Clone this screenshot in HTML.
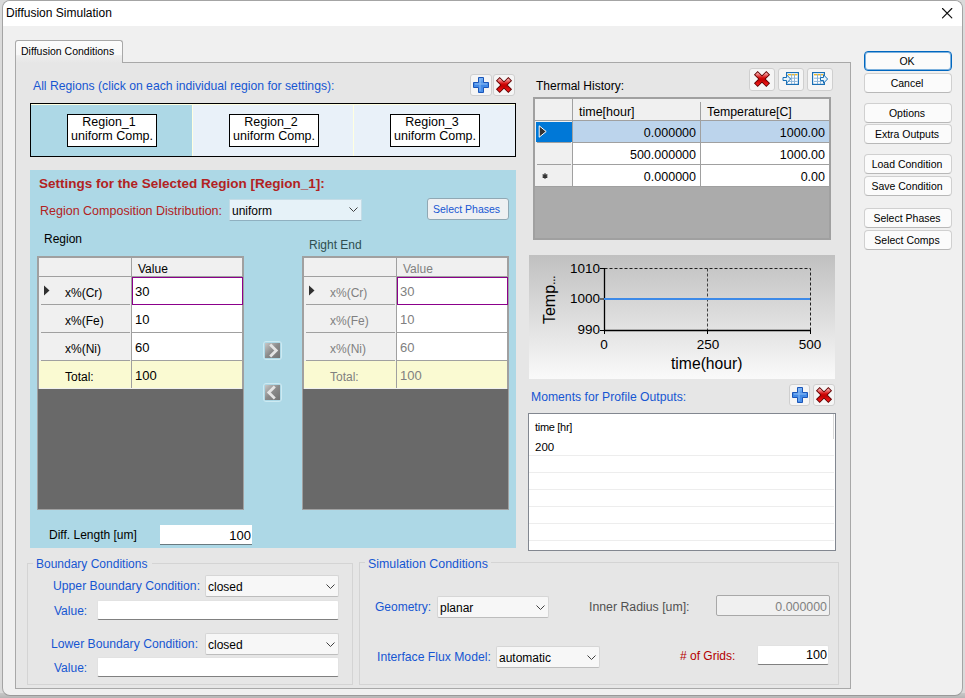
<!DOCTYPE html><html><head><meta charset="utf-8"><style>
html,body{margin:0;padding:0;width:965px;height:698px;overflow:hidden;background:#dadada;}
*{box-sizing:border-box;}
.t{position:absolute;white-space:nowrap;line-height:1;font-family:"Liberation Sans",sans-serif;}
.r{position:absolute;}
svg{position:absolute;overflow:visible;}
</style></head><body>
<div class="r" style="left:0px;top:693px;width:965px;height:5px;background:linear-gradient(#c8c8c8,#b4b4b4);"></div>
<div class="r" style="left:2px;top:0px;width:961px;height:696px;background:#f0f0f0;border:1px solid #a4a4a4;border-bottom-color:#999;border-radius:8px;"></div>
<div class="r" style="left:3px;top:1px;width:959px;height:25px;background:#ffffff;border-radius:7px 7px 0 0;"></div>
<div class="t" style="left:6px;top:7px;font-size:12px;color:#000;font-weight:normal;">Diffusion Simulation</div>
<svg style="left:942px;top:8px" width="11" height="11"><path d="M0.5 0.5 L9.8 9.8 M9.8 0.5 L0.5 9.8" stroke="#111" stroke-width="1.15" stroke-linecap="round"/></svg>
<div class="r" style="left:15px;top:62px;width:836px;height:627px;background:#e6e6e6;border:1px solid #a8a8a8;"></div>
<div class="r" style="left:15px;top:40px;width:108px;height:23px;background:linear-gradient(#fcfcfc 0%,#f7f7f7 65%,#eeeeee 66%,#e6e6e6 100%);border:1px solid #a8a8a8;border-bottom:none;border-radius:3px 3px 0 0;"></div>
<div class="t" style="left:21px;top:46px;font-size:10.5px;color:#000;font-weight:normal;">Diffusion Conditions</div>
<div class="t" style="left:33px;top:80px;font-size:12.2px;color:#1656d2;font-weight:normal;">All Regions (click on each individual region for settings):</div>
<div class="r" style="left:470px;top:74px;width:22px;height:22px;background:#f5f5f5;border:1px solid #cfcfcf;border-radius:3px;"></div>
<svg style="left:473px;top:77px" width="16" height="16" viewBox="0 0 16 16">
<defs><linearGradient id="pg473" x1="0" y1="0" x2="0" y2="1"><stop offset="0" stop-color="#80b8f6"/><stop offset="0.5" stop-color="#3f88e6"/><stop offset="1" stop-color="#4a90ea"/></linearGradient></defs>
<path d="M5.5 0.5 H10.5 V5.5 H15.5 V10.5 H10.5 V15.5 H5.5 V10.5 H0.5 V5.5 H5.5 Z" fill="url(#pg473)" stroke="#1a55b8" stroke-width="1"/>
<path d="M7 2 V14 M2 7 H14" stroke="#a8d0fa" stroke-width="1" opacity="0.7"/>
</svg>
<div class="r" style="left:493px;top:74px;width:22px;height:22px;background:#f5f5f5;border:1px solid #cfcfcf;border-radius:3px;"></div>
<svg style="left:496px;top:77px" width="16" height="16" viewBox="0 0 16 16">
<defs><linearGradient id="xg49677" x1="0" y1="0" x2="0" y2="1"><stop offset="0" stop-color="#f8a0a0"/><stop offset="0.4" stop-color="#d40808"/><stop offset="0.6" stop-color="#c00000"/><stop offset="1" stop-color="#f01818"/></linearGradient></defs>
<path d="M1.8 1.8 L14.2 14.2 M14.2 1.8 L1.8 14.2" stroke="#600000" stroke-width="5.3"/>
<path d="M2.45 2.45 L13.55 13.55 M13.55 2.45 L2.45 13.55" stroke="url(#xg49677)" stroke-width="3.6"/>
</svg>
<div class="r" style="left:30px;top:103px;width:486px;height:54px;background:#e9f1f9;border:1px solid #000;"></div>
<div class="r" style="left:31px;top:104px;width:484px;height:1px;background:#ffffe0;"></div>
<div class="r" style="left:31px;top:104px;width:1px;height:52px;background:#ffffe0;"></div>
<div class="r" style="left:31px;top:105px;width:161px;height:51px;background:#add8e6;"></div>
<div class="r" style="left:192px;top:104px;width:1px;height:52px;background:#ffffe0;"></div>
<div class="r" style="left:353px;top:104px;width:1px;height:52px;background:#ffffe0;"></div>
<div class="r" style="left:67px;top:114px;width:90px;height:33px;background:#fff;border:1px solid #000;"></div>
<div class="t" style="left:9px;width:200px;top:116px;font-size:12.5px;color:#000;font-weight:normal;text-align:center;">Region_1</div>
<div class="t" style="left:12px;width:200px;top:130px;font-size:12.5px;color:#000;font-weight:normal;text-align:center;">uniform Comp.</div>
<div class="r" style="left:229px;top:114px;width:90px;height:33px;background:#fff;border:1px solid #000;"></div>
<div class="t" style="left:171px;width:200px;top:116px;font-size:12.5px;color:#000;font-weight:normal;text-align:center;">Region_2</div>
<div class="t" style="left:174px;width:200px;top:130px;font-size:12.5px;color:#000;font-weight:normal;text-align:center;">uniform Comp.</div>
<div class="r" style="left:390px;top:114px;width:90px;height:33px;background:#fff;border:1px solid #000;"></div>
<div class="t" style="left:332px;width:200px;top:116px;font-size:12.5px;color:#000;font-weight:normal;text-align:center;">Region_3</div>
<div class="t" style="left:335px;width:200px;top:130px;font-size:12.5px;color:#000;font-weight:normal;text-align:center;">uniform Comp.</div>
<div class="r" style="left:30px;top:170px;width:486px;height:378px;background:#add8e6;"></div>
<div class="t" style="left:39px;top:177px;font-size:13.5px;color:#b22222;font-weight:bold;">Settings for the Selected Region [Region_1]:</div>
<div class="t" style="left:40px;top:205px;font-size:12.5px;color:#b22222;font-weight:normal;">Region Composition Distribution:</div>
<div class="r" style="left:229px;top:199px;width:133px;height:22px;background:#e6f2f8;border:1px solid #c4dce6;border-bottom:1px solid #8fb0c0;"></div>
<div class="t" style="left:232px;top:205px;font-size:12px;color:#000;font-weight:normal;">uniform</div>
<svg style="left:349px;top:207px" width="10" height="6"><path d="M0.5 0.5 L4.5 4.5 L8.5 0.5" fill="none" stroke="#404040" stroke-width="1"/></svg>
<div class="r" style="left:427px;top:198px;width:82px;height:22px;background:#eef0f2;border:1px solid #90a8b4;border-radius:3px;"></div>
<div class="t" style="left:433px;top:204px;font-size:10.5px;color:#1656d2;font-weight:normal;">Select Phases</div>
<div class="t" style="left:44px;top:233px;font-size:12px;color:#000;font-weight:normal;">Region</div>
<div class="t" style="left:309px;top:239px;font-size:12px;color:#2f4f4f;font-weight:normal;">Right End</div>
<div class="r" style="left:37px;top:256px;width:207px;height:254px;background:#696969;border:1px solid #a0a0a0;"></div>
<div class="r" style="left:38px;top:257px;width:205px;height:1px;background:#a0a0a0;"></div>
<div class="r" style="left:38px;top:257px;width:1px;height:132px;background:#a0a0a0;"></div>
<div class="r" style="left:242px;top:257px;width:1px;height:132px;background:#a0a0a0;"></div>
<div class="r" style="left:39px;top:258px;width:203px;height:19px;background:#f0f0f0;border-bottom:1px solid #a0a0a0;"></div>
<div class="r" style="left:131px;top:258px;width:1px;height:131px;background:#a0a0a0;"></div>
<div class="t" style="left:138px;top:263px;font-size:12px;color:#000;font-weight:normal;">Value</div>
<div class="r" style="left:39px;top:277px;width:92px;height:27px;background:#f0f0f0;"></div>
<div class="r" style="left:132px;top:277px;width:110px;height:27px;background:#fff;"></div>
<div class="r" style="left:39px;top:304px;width:92px;height:1px;background:#f0f0f0;"></div>
<div class="r" style="left:41px;top:304px;width:89px;height:1px;background:#a0a0a0;"></div>
<div class="r" style="left:132px;top:304px;width:110px;height:1px;background:#a0a0a0;"></div>
<div class="t" style="left:65px;top:287px;font-size:12px;color:#000;font-weight:normal;">x%(Cr)</div>
<div class="t" style="left:135px;top:285px;font-size:13px;color:#000;font-weight:normal;">30</div>
<div class="r" style="left:39px;top:305px;width:92px;height:27px;background:#f0f0f0;"></div>
<div class="r" style="left:132px;top:305px;width:110px;height:27px;background:#fff;"></div>
<div class="r" style="left:39px;top:332px;width:92px;height:1px;background:#f0f0f0;"></div>
<div class="r" style="left:41px;top:332px;width:89px;height:1px;background:#a0a0a0;"></div>
<div class="r" style="left:132px;top:332px;width:110px;height:1px;background:#a0a0a0;"></div>
<div class="t" style="left:65px;top:315px;font-size:12px;color:#000;font-weight:normal;">x%(Fe)</div>
<div class="t" style="left:135px;top:313px;font-size:13px;color:#000;font-weight:normal;">10</div>
<div class="r" style="left:39px;top:333px;width:92px;height:27px;background:#f0f0f0;"></div>
<div class="r" style="left:132px;top:333px;width:110px;height:27px;background:#fff;"></div>
<div class="r" style="left:39px;top:360px;width:92px;height:1px;background:#f0f0f0;"></div>
<div class="r" style="left:41px;top:360px;width:89px;height:1px;background:#a0a0a0;"></div>
<div class="r" style="left:132px;top:360px;width:110px;height:1px;background:#a0a0a0;"></div>
<div class="t" style="left:65px;top:343px;font-size:12px;color:#000;font-weight:normal;">x%(Ni)</div>
<div class="t" style="left:135px;top:341px;font-size:13px;color:#000;font-weight:normal;">60</div>
<div class="r" style="left:39px;top:361px;width:92px;height:27px;background:#fafad2;"></div>
<div class="r" style="left:132px;top:361px;width:110px;height:27px;background:#fafad2;"></div>
<div class="r" style="left:39px;top:388px;width:203px;height:1px;background:#f0f0f0;"></div>
<div class="t" style="left:65px;top:371px;font-size:12px;color:#000;font-weight:normal;">Total:</div>
<div class="t" style="left:135px;top:369px;font-size:13px;color:#000;font-weight:normal;">100</div>
<div class="r" style="left:132px;top:277px;width:111px;height:28px;border:1px solid #8b008b;"></div>
<svg style="left:44px;top:285px" width="7" height="11"><path d="M0 0.5 L5.5 5.5 L0 10.5 Z" fill="#303030"/></svg>
<div class="r" style="left:302px;top:256px;width:207px;height:254px;background:#696969;border:1px solid #a0a0a0;"></div>
<div class="r" style="left:303px;top:257px;width:205px;height:1px;background:#a0a0a0;"></div>
<div class="r" style="left:303px;top:257px;width:1px;height:132px;background:#a0a0a0;"></div>
<div class="r" style="left:507px;top:257px;width:1px;height:132px;background:#a0a0a0;"></div>
<div class="r" style="left:304px;top:258px;width:203px;height:19px;background:#f0f0f0;border-bottom:1px solid #a0a0a0;"></div>
<div class="r" style="left:396px;top:258px;width:1px;height:131px;background:#a0a0a0;"></div>
<div class="t" style="left:403px;top:263px;font-size:12px;color:#808080;font-weight:normal;">Value</div>
<div class="r" style="left:304px;top:277px;width:92px;height:27px;background:#f0f0f0;"></div>
<div class="r" style="left:397px;top:277px;width:110px;height:27px;background:#fff;"></div>
<div class="r" style="left:304px;top:304px;width:92px;height:1px;background:#f0f0f0;"></div>
<div class="r" style="left:306px;top:304px;width:89px;height:1px;background:#a0a0a0;"></div>
<div class="r" style="left:397px;top:304px;width:110px;height:1px;background:#a0a0a0;"></div>
<div class="t" style="left:330px;top:287px;font-size:12px;color:#808080;font-weight:normal;">x%(Cr)</div>
<div class="t" style="left:400px;top:285px;font-size:13px;color:#808080;font-weight:normal;">30</div>
<div class="r" style="left:304px;top:305px;width:92px;height:27px;background:#f0f0f0;"></div>
<div class="r" style="left:397px;top:305px;width:110px;height:27px;background:#fff;"></div>
<div class="r" style="left:304px;top:332px;width:92px;height:1px;background:#f0f0f0;"></div>
<div class="r" style="left:306px;top:332px;width:89px;height:1px;background:#a0a0a0;"></div>
<div class="r" style="left:397px;top:332px;width:110px;height:1px;background:#a0a0a0;"></div>
<div class="t" style="left:330px;top:315px;font-size:12px;color:#808080;font-weight:normal;">x%(Fe)</div>
<div class="t" style="left:400px;top:313px;font-size:13px;color:#808080;font-weight:normal;">10</div>
<div class="r" style="left:304px;top:333px;width:92px;height:27px;background:#f0f0f0;"></div>
<div class="r" style="left:397px;top:333px;width:110px;height:27px;background:#fff;"></div>
<div class="r" style="left:304px;top:360px;width:92px;height:1px;background:#f0f0f0;"></div>
<div class="r" style="left:306px;top:360px;width:89px;height:1px;background:#a0a0a0;"></div>
<div class="r" style="left:397px;top:360px;width:110px;height:1px;background:#a0a0a0;"></div>
<div class="t" style="left:330px;top:343px;font-size:12px;color:#808080;font-weight:normal;">x%(Ni)</div>
<div class="t" style="left:400px;top:341px;font-size:13px;color:#808080;font-weight:normal;">60</div>
<div class="r" style="left:304px;top:361px;width:92px;height:27px;background:#fafad2;"></div>
<div class="r" style="left:397px;top:361px;width:110px;height:27px;background:#fafad2;"></div>
<div class="r" style="left:304px;top:388px;width:203px;height:1px;background:#f0f0f0;"></div>
<div class="t" style="left:330px;top:371px;font-size:12px;color:#808080;font-weight:normal;">Total:</div>
<div class="t" style="left:400px;top:369px;font-size:13px;color:#808080;font-weight:normal;">100</div>
<div class="r" style="left:397px;top:277px;width:111px;height:28px;border:1px solid #8b008b;"></div>
<svg style="left:309px;top:285px" width="7" height="11"><path d="M0 0.5 L5.5 5.5 L0 10.5 Z" fill="#303030"/></svg>
<div class="r" style="left:263px;top:341px;width:19px;height:19px;background:#add8e6;border:1px solid #cdeaf2;border-radius:3px;"></div>
<svg style="left:265px;top:343px" width="15" height="15"><defs><linearGradient id="ag341" x1="0" y1="0" x2="1" y2="1"><stop offset="0" stop-color="#c8c8c8"/><stop offset="0.5" stop-color="#8a8a8a"/><stop offset="1" stop-color="#747474"/></linearGradient></defs>
<rect x="0" y="0" width="15" height="15" fill="url(#ag341)"/><path d="M5.2 1.6 L11.2 7.5 L5.2 13.4" fill="none" stroke="#e4e4e4" stroke-width="2.8"/></svg>
<div class="r" style="left:263px;top:383px;width:19px;height:19px;background:#add8e6;border:1px solid #cdeaf2;border-radius:3px;"></div>
<svg style="left:265px;top:385px" width="15" height="15"><defs><linearGradient id="ag383" x1="0" y1="0" x2="1" y2="1"><stop offset="0" stop-color="#c8c8c8"/><stop offset="0.5" stop-color="#8a8a8a"/><stop offset="1" stop-color="#747474"/></linearGradient></defs>
<rect x="0" y="0" width="15" height="15" fill="url(#ag383)"/><path d="M9.8 1.6 L3.8 7.5 L9.8 13.4" fill="none" stroke="#e4e4e4" stroke-width="2.8"/></svg>
<div class="t" style="left:49px;top:529px;font-size:12px;color:#000;font-weight:normal;">Diff. Length [um]</div>
<div class="r" style="left:160px;top:525px;width:92px;height:20px;background:#fff;border-bottom:1px solid #6a7a80;"></div>
<div class="t" style="right:714px;top:529px;font-size:13px;color:#000;font-weight:normal;text-align:right;">100</div>
<div class="t" style="left:536px;top:80px;font-size:12px;color:#000;font-weight:normal;">Thermal History:</div>
<div class="r" style="left:749px;top:68px;width:26px;height:23px;background:#f5f5f5;border:1px solid #cfcfcf;border-radius:3px;"></div>
<svg style="left:754px;top:71px" width="16" height="16" viewBox="0 0 16 16">
<defs><linearGradient id="xg75471" x1="0" y1="0" x2="0" y2="1"><stop offset="0" stop-color="#f8a0a0"/><stop offset="0.4" stop-color="#d40808"/><stop offset="0.6" stop-color="#c00000"/><stop offset="1" stop-color="#f01818"/></linearGradient></defs>
<path d="M1.8 1.8 L14.2 14.2 M14.2 1.8 L1.8 14.2" stroke="#600000" stroke-width="5.3"/>
<path d="M2.45 2.45 L13.55 13.55 M13.55 2.45 L2.45 13.55" stroke="url(#xg75471)" stroke-width="3.6"/>
</svg>
<div class="r" style="left:778px;top:68px;width:26px;height:23px;background:#f5f5f5;border:1px solid #cfcfcf;border-radius:3px;"></div>
<div class="r" style="left:807px;top:68px;width:26px;height:23px;background:#f5f5f5;border:1px solid #cfcfcf;border-radius:3px;"></div>
<svg style="left:782px;top:71px" width="20" height="16" viewBox="0 0 20 16"><rect x="4.6" y="1.6" width="11.8" height="11.8" fill="#fff" stroke="#1a6fb5" stroke-width="1.2"/>
<rect x="5.5" y="2.5" width="10" height="2.5" fill="#e4f2fb"/>
<rect x="6" y="3" width="9.5" height="1.3" fill="#f5b820"/>
<path d="M9.6 3 V13 M12.5 3 V13 M6 7.2 H15.5 M6 10.4 H15.5" stroke="#8cb4d8" stroke-width="1"/>
<path d="M1 6.5 H4.5 V3.8 L8.6 8 L4.5 12.2 V9.5 H1 Z" fill="#e6f4fc" stroke="#1a6fb5" stroke-width="1"/></svg>
<svg style="left:812px;top:71px" width="20" height="16" viewBox="0 0 20 16"><rect x="0.6" y="1.6" width="11.8" height="11.8" fill="#fff" stroke="#1a6fb5" stroke-width="1.2"/>
<rect x="1.5" y="2.5" width="10" height="2.5" fill="#e4f2fb"/>
<rect x="2" y="3" width="9.5" height="1.3" fill="#f5b820"/>
<path d="M5.5 3 V13 M8.6 3 V13 M2 7.2 H11.5 M2 10.4 H11.5" stroke="#8cb4d8" stroke-width="1"/>
<path d="M8.5 6.5 H11.5 V3.8 L15.6 8 L11.5 12.2 V9.5 H8.5 Z" fill="#e6f4fc" stroke="#1a6fb5" stroke-width="1"/></svg>
<div class="r" style="left:533px;top:97px;width:298px;height:143px;background:#ababab;border:2px solid #a0a0a0;"></div>
<div class="r" style="left:535px;top:99px;width:294px;height:22px;background:#f0f0f0;border-bottom:1px solid #a0a0a0;"></div>
<div class="r" style="left:572px;top:99px;width:1px;height:88px;background:#a0a0a0;"></div>
<div class="r" style="left:700px;top:102px;width:1px;height:85px;background:#a0a0a0;"></div>
<div class="t" style="left:579px;top:106px;font-size:12.5px;color:#000;font-weight:normal;">time[hour]</div>
<div class="t" style="left:707px;top:106px;font-size:12.3px;color:#000;font-weight:normal;">Temperature[C]</div>
<div class="r" style="left:535px;top:121px;width:37px;height:22px;background:#f0f0f0;"></div>
<div class="r" style="left:536px;top:122px;width:36px;height:20px;background:#0078d7;"></div>
<div class="r" style="left:573px;top:121px;width:127px;height:21px;background:#bcd4ec;"></div>
<div class="r" style="left:701px;top:121px;width:128px;height:21px;background:#bcd4ec;"></div>
<div class="r" style="left:573px;top:142px;width:256px;height:1px;background:#a0a0a0;"></div>
<div class="t" style="right:269px;top:127px;font-size:12.5px;color:#000;font-weight:normal;text-align:right;">0.000000</div>
<div class="t" style="right:140px;top:127px;font-size:12.5px;color:#000;font-weight:normal;text-align:right;">1000.00</div>
<div class="r" style="left:535px;top:143px;width:37px;height:22px;background:#f0f0f0;"></div>
<div class="r" style="left:573px;top:143px;width:127px;height:21px;background:#fff;"></div>
<div class="r" style="left:701px;top:143px;width:128px;height:21px;background:#fff;"></div>
<div class="r" style="left:573px;top:164px;width:256px;height:1px;background:#a0a0a0;"></div>
<div class="t" style="right:269px;top:149px;font-size:12.5px;color:#000;font-weight:normal;text-align:right;">500.000000</div>
<div class="t" style="right:140px;top:149px;font-size:12.5px;color:#000;font-weight:normal;text-align:right;">1000.00</div>
<div class="r" style="left:535px;top:165px;width:37px;height:22px;background:#f0f0f0;"></div>
<div class="r" style="left:573px;top:165px;width:127px;height:21px;background:#fff;"></div>
<div class="r" style="left:701px;top:165px;width:128px;height:21px;background:#fff;"></div>
<div class="r" style="left:573px;top:186px;width:256px;height:1px;background:#a0a0a0;"></div>
<div class="t" style="right:269px;top:171px;font-size:12.5px;color:#000;font-weight:normal;text-align:right;">0.000000</div>
<div class="t" style="right:140px;top:171px;font-size:12.5px;color:#000;font-weight:normal;text-align:right;">0.00</div>
<div class="r" style="left:537px;top:142px;width:34px;height:1px;background:#a0a0a0;"></div>
<div class="r" style="left:537px;top:164px;width:34px;height:1px;background:#a0a0a0;"></div>
<div class="r" style="left:535px;top:186px;width:37px;height:1px;background:#a0a0a0;"></div>
<svg style="left:538px;top:125px" width="10" height="14"><path d="M1.2 0.8 L8.2 6.5 L1.2 12.2 Z" fill="#333" stroke="#fff" stroke-width="1"/></svg>
<svg style="left:542px;top:173px" width="6" height="6"><path d="M3 0.3 V5.7 M0.6 1.6 L5.4 4.4 M0.6 4.4 L5.4 1.6" stroke="#333" stroke-width="1.3"/></svg>
<div class="r" style="left:529px;top:255px;width:306px;height:124px;background:linear-gradient(#c0c0c0,#fafafa);"></div>
<svg style="left:0;top:0" width="965" height="698">
<path d="M604.5 268.5 H810.5 V330" fill="none" stroke="#202020" stroke-width="1" stroke-dasharray="3,2"/>
<path d="M707.5 268.5 V330" fill="none" stroke="#404040" stroke-width="1" stroke-dasharray="3,2"/>
<path d="M604.5 268 V330.5 H810.5" fill="none" stroke="#000" stroke-width="1.3"/>
<path d="M600 268.5 H604 M600 299 H604 M600 330.5 H604 M604.5 330 V334 M707.5 330 V334 M810.5 330 V334" stroke="#000" stroke-width="1"/>
<path d="M604 299 H810" stroke="#3d8ae8" stroke-width="2.2"/>
</svg>
<div class="t" style="right:365px;top:262px;font-size:13.5px;color:#000;font-weight:normal;text-align:right;">1010</div>
<div class="t" style="right:365px;top:292px;font-size:13.5px;color:#000;font-weight:normal;text-align:right;">1000</div>
<div class="t" style="right:365px;top:323px;font-size:13.5px;color:#000;font-weight:normal;text-align:right;">990</div>
<div class="t" style="left:504px;width:200px;top:338px;font-size:13.5px;color:#000;font-weight:normal;text-align:center;">0</div>
<div class="t" style="left:608px;width:200px;top:338px;font-size:13.5px;color:#000;font-weight:normal;text-align:center;">250</div>
<div class="t" style="left:710px;width:200px;top:338px;font-size:13.5px;color:#000;font-weight:normal;text-align:center;">500</div>
<div class="t" style="left:671px;top:356px;font-size:15.7px;color:#000;font-weight:normal;">time(hour)</div>
<div class="t" style="left:520px;top:292px;width:60px;height:16px;font-size:16px;transform:rotate(-90deg);text-align:center;color:#000;">Temp<span style="letter-spacing:-0.6px;font-size:13px">...</span></div>
<div class="t" style="left:531px;top:391px;font-size:12.2px;color:#1656d2;font-weight:normal;">Moments for Profile Outputs:</div>
<div class="r" style="left:789px;top:384px;width:21px;height:22px;background:#f5f5f5;border:1px solid #cfcfcf;border-radius:3px;"></div>
<svg style="left:792px;top:387px" width="16" height="16" viewBox="0 0 16 16">
<defs><linearGradient id="pg792" x1="0" y1="0" x2="0" y2="1"><stop offset="0" stop-color="#80b8f6"/><stop offset="0.5" stop-color="#3f88e6"/><stop offset="1" stop-color="#4a90ea"/></linearGradient></defs>
<path d="M5.5 0.5 H10.5 V5.5 H15.5 V10.5 H10.5 V15.5 H5.5 V10.5 H0.5 V5.5 H5.5 Z" fill="url(#pg792)" stroke="#1a55b8" stroke-width="1"/>
<path d="M7 2 V14 M2 7 H14" stroke="#a8d0fa" stroke-width="1" opacity="0.7"/>
</svg>
<div class="r" style="left:813px;top:384px;width:22px;height:22px;background:#f5f5f5;border:1px solid #cfcfcf;border-radius:3px;"></div>
<svg style="left:816px;top:387px" width="16" height="16" viewBox="0 0 16 16">
<defs><linearGradient id="xg816387" x1="0" y1="0" x2="0" y2="1"><stop offset="0" stop-color="#f8a0a0"/><stop offset="0.4" stop-color="#d40808"/><stop offset="0.6" stop-color="#c00000"/><stop offset="1" stop-color="#f01818"/></linearGradient></defs>
<path d="M1.8 1.8 L14.2 14.2 M14.2 1.8 L1.8 14.2" stroke="#600000" stroke-width="5.3"/>
<path d="M2.45 2.45 L13.55 13.55 M13.55 2.45 L2.45 13.55" stroke="url(#xg816387)" stroke-width="3.6"/>
</svg>
<div class="r" style="left:528px;top:413px;width:308px;height:138px;background:#fff;border:1px solid #828790;"></div>
<div class="r" style="left:529px;top:455px;width:305px;height:1px;background:#ededed;"></div>
<div class="r" style="left:529px;top:472px;width:305px;height:1px;background:#ededed;"></div>
<div class="r" style="left:529px;top:489px;width:305px;height:1px;background:#ededed;"></div>
<div class="r" style="left:529px;top:506px;width:305px;height:1px;background:#ededed;"></div>
<div class="r" style="left:529px;top:523px;width:305px;height:1px;background:#ededed;"></div>
<div class="r" style="left:529px;top:540px;width:305px;height:1px;background:#ededed;"></div>
<div class="r" style="left:833px;top:414px;width:1px;height:25px;background:#d8d8d8;"></div>
<div class="t" style="left:535px;top:422px;font-size:11px;color:#000;font-weight:normal;letter-spacing:-0.3px;">time [hr]</div>
<div class="t" style="left:535px;top:442px;font-size:11.5px;color:#000;font-weight:normal;">200</div>
<div class="r" style="left:27px;top:563px;width:326px;height:122px;border:1px solid #d4d4d4;"></div>
<div class="r" style="left:33px;top:556px;width:119px;height:16px;background:#e6e6e6;"></div>
<div class="t" style="left:36px;top:558px;font-size:12px;color:#1656d2;font-weight:normal;">Boundary Conditions</div>
<div class="t" style="left:53px;top:580px;font-size:12.2px;color:#1656d2;font-weight:normal;">Upper Boundary Condition:</div>
<div class="t" style="left:51px;top:638px;font-size:12.2px;color:#1656d2;font-weight:normal;">Lower Boundary Condition:</div>
<div class="t" style="left:54px;top:605px;font-size:12px;color:#1656d2;font-weight:normal;">Value:</div>
<div class="t" style="left:54px;top:662px;font-size:12px;color:#1656d2;font-weight:normal;">Value:</div>
<div class="r" style="left:205px;top:575px;width:134px;height:22px;background:#f7f7f7;border:1px solid #d6d6d6;border-bottom:1px solid #bdbdbd;border-radius:2px;"></div>
<div class="t" style="left:208px;top:581px;font-size:12px;color:#000;font-weight:normal;">closed</div>
<svg style="left:326px;top:584px" width="10" height="6"><path d="M0.5 0.5 L4.5 4.5 L8.5 0.5" fill="none" stroke="#404040" stroke-width="1"/></svg>
<div class="r" style="left:97px;top:600px;width:242px;height:20px;background:#fff;border:1px solid #e2e2e2;border-bottom:1px solid #808080;border-radius:2px;"></div>
<div class="r" style="left:205px;top:633px;width:134px;height:22px;background:#f7f7f7;border:1px solid #d6d6d6;border-bottom:1px solid #bdbdbd;border-radius:2px;"></div>
<div class="t" style="left:208px;top:639px;font-size:12px;color:#000;font-weight:normal;">closed</div>
<svg style="left:326px;top:642px" width="10" height="6"><path d="M0.5 0.5 L4.5 4.5 L8.5 0.5" fill="none" stroke="#404040" stroke-width="1"/></svg>
<div class="r" style="left:97px;top:657px;width:242px;height:20px;background:#fff;border:1px solid #e2e2e2;border-bottom:1px solid #808080;border-radius:2px;"></div>
<div class="r" style="left:359px;top:562px;width:480px;height:123px;border:1px solid #d4d4d4;"></div>
<div class="r" style="left:365px;top:555px;width:126px;height:16px;background:#e6e6e6;"></div>
<div class="t" style="left:368px;top:558px;font-size:12.4px;color:#1656d2;font-weight:normal;">Simulation Conditions</div>
<div class="t" style="left:375px;top:601px;font-size:12px;color:#1656d2;font-weight:normal;">Geometry:</div>
<div class="r" style="left:437px;top:596px;width:112px;height:22px;background:#f7f7f7;border:1px solid #d6d6d6;border-bottom:1px solid #bdbdbd;border-radius:2px;"></div>
<div class="t" style="left:440px;top:602px;font-size:12px;color:#000;font-weight:normal;">planar</div>
<svg style="left:536px;top:605px" width="10" height="6"><path d="M0.5 0.5 L4.5 4.5 L8.5 0.5" fill="none" stroke="#404040" stroke-width="1"/></svg>
<div class="t" style="left:589px;top:601px;font-size:12.3px;color:#505050;font-weight:normal;">Inner Radius [um]:</div>
<div class="r" style="left:716px;top:595px;width:114px;height:21px;background:#f0f0f0;border:1px solid #a8a8a8;border-radius:2px;"></div>
<div class="t" style="right:138px;top:601px;font-size:12.4px;color:#808080;font-weight:normal;text-align:right;">0.000000</div>
<div class="t" style="left:377px;top:651px;font-size:12.2px;color:#1656d2;font-weight:normal;">Interface Flux Model:</div>
<div class="r" style="left:496px;top:646px;width:104px;height:22px;background:#f7f7f7;border:1px solid #d6d6d6;border-bottom:1px solid #bdbdbd;border-radius:2px;"></div>
<div class="t" style="left:499px;top:652px;font-size:12px;color:#000;font-weight:normal;">automatic</div>
<svg style="left:587px;top:655px" width="10" height="6"><path d="M0.5 0.5 L4.5 4.5 L8.5 0.5" fill="none" stroke="#404040" stroke-width="1"/></svg>
<div class="t" style="left:680px;top:650px;font-size:12px;color:#b40000;font-weight:normal;"># of Grids:</div>
<div class="r" style="left:757px;top:645px;width:72px;height:20px;background:#fff;border:1px solid #e2e2e2;border-bottom:1px solid #808080;border-radius:2px;"></div>
<div class="t" style="right:138px;top:649px;font-size:12.6px;color:#000;font-weight:normal;text-align:right;">100</div>
<div class="r" style="left:864px;top:51px;width:88px;height:20px;background:#fbfbfb;border:1px solid #0067c0;box-shadow:inset 0 0 0 1px rgba(0,103,192,0.5);border-radius:4px;"></div>
<div class="t" style="left:807px;width:200px;top:56px;font-size:10.5px;color:#000;font-weight:normal;text-align:center;">OK</div>
<div class="r" style="left:864px;top:73px;width:88px;height:20px;background:#fbfbfb;border:1px solid #d0d0d0;border-bottom-color:#b8b8b8;border-radius:4px;"></div>
<div class="t" style="left:807px;width:200px;top:78px;font-size:10.5px;color:#000;font-weight:normal;text-align:center;">Cancel</div>
<div class="r" style="left:864px;top:103px;width:88px;height:20px;background:#fbfbfb;border:1px solid #d0d0d0;border-bottom-color:#b8b8b8;border-radius:4px;"></div>
<div class="t" style="left:807px;width:200px;top:108px;font-size:10.5px;color:#000;font-weight:normal;text-align:center;">Options</div>
<div class="r" style="left:864px;top:124px;width:88px;height:20px;background:#fbfbfb;border:1px solid #d0d0d0;border-bottom-color:#b8b8b8;border-radius:4px;"></div>
<div class="t" style="left:807px;width:200px;top:129px;font-size:10.5px;color:#000;font-weight:normal;text-align:center;">Extra Outputs</div>
<div class="r" style="left:864px;top:154px;width:88px;height:20px;background:#fbfbfb;border:1px solid #d0d0d0;border-bottom-color:#b8b8b8;border-radius:4px;"></div>
<div class="t" style="left:807px;width:200px;top:159px;font-size:10.5px;color:#000;font-weight:normal;text-align:center;">Load Condition</div>
<div class="r" style="left:864px;top:176px;width:88px;height:20px;background:#fbfbfb;border:1px solid #d0d0d0;border-bottom-color:#b8b8b8;border-radius:4px;"></div>
<div class="t" style="left:807px;width:200px;top:181px;font-size:10.5px;color:#000;font-weight:normal;text-align:center;">Save Condition</div>
<div class="r" style="left:864px;top:208px;width:88px;height:20px;background:#fbfbfb;border:1px solid #d0d0d0;border-bottom-color:#b8b8b8;border-radius:4px;"></div>
<div class="t" style="left:807px;width:200px;top:213px;font-size:10.5px;color:#000;font-weight:normal;text-align:center;">Select Phases</div>
<div class="r" style="left:864px;top:230px;width:88px;height:20px;background:#fbfbfb;border:1px solid #d0d0d0;border-bottom-color:#b8b8b8;border-radius:4px;"></div>
<div class="t" style="left:807px;width:200px;top:235px;font-size:10.5px;color:#000;font-weight:normal;text-align:center;">Select Comps</div>
</body></html>
